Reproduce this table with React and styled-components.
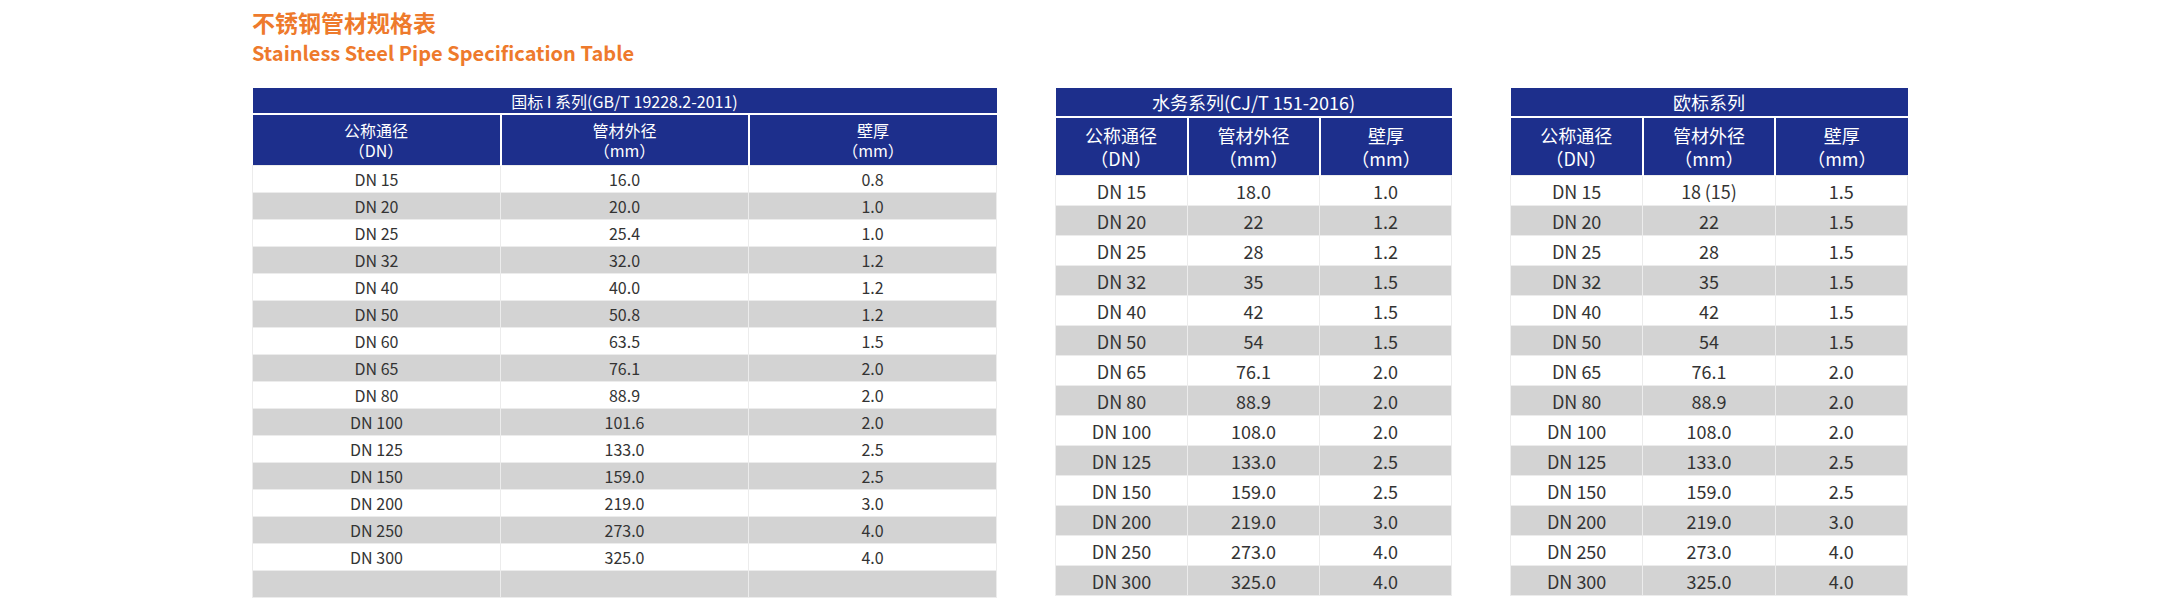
import React from "react";
import styled, { createGlobalStyle } from "styled-components";

const GlobalStyle = createGlobalStyle`
  html, body { margin: 0; padding: 0; background: #fff; }
  body { font-family: "Noto Sans CJK SC", "Noto Sans", sans-serif; color: #333; }
`;

const Page = styled.div`
  width: 2183px;
  height: 616px;
  box-sizing: border-box;
  padding: 6px 0 0 252px;
  overflow: hidden;
`;

const TitleCn = styled.h1`
  margin: 0;
  font-size: 23px;
  line-height: 32px;
  font-weight: 700;
  color: #ee7a2c;
`;

const TitleEn = styled.h2`
  margin: 0;
  font-size: 20px;
  line-height: 30px;
  font-weight: 700;
  color: #ee7a2c;
`;

const Tables = styled.div`
  display: flex;
  align-items: flex-start;
  gap: 58px;
  margin-top: 20px;
`;

const Table = styled.table`
  width: ${(p) => p.$w}px;
  border-collapse: collapse;
  table-layout: fixed;
`;

const Caption = styled.th`
  height: ${(p) => (p.$big ? 28 : 25)}px;
  padding: 0;
  background: #1d2f8c;
  color: #fff;
  font-weight: 400;
  font-size: ${(p) => (p.$big ? 18 : 16)}px;
  line-height: 1;
  text-align: center;
  border-bottom: 2px solid #fff;
`;

const HeadCell = styled.th`
  height: ${(p) => (p.$big ? 57 : 50)}px;
  padding: 0;
  background: #1d2f8c;
  color: #fff;
  font-weight: 400;
  font-size: ${(p) => (p.$big ? 18 : 16)}px;
  line-height: ${(p) => (p.$big ? 23 : 20)}px;
  text-align: center;
  border-left: 2px solid #fff;
  &:first-child { border-left: none; }
`;

const Row = styled.tr`
  background: ${(p) => (p.$alt ? "#d3d3d3" : "#fff")};
`;

const Cell = styled.td`
  height: ${(p) => (p.$big ? 29 : 26)}px;
  padding: 0;
  text-align: center;
  font-size: ${(p) => (p.$big ? 18 : 16)}px;
  line-height: 1;
  color: #333;
  border: 1px solid #ececec;
`;

const heads = [
  ["公称通径", "（DN）"],
  ["管材外径", "（mm）"],
  ["壁厚", "（mm）"],
];

const t1 = [
  ["DN 15", "16.0", "0.8"],
  ["DN 20", "20.0", "1.0"],
  ["DN 25", "25.4", "1.0"],
  ["DN 32", "32.0", "1.2"],
  ["DN 40", "40.0", "1.2"],
  ["DN 50", "50.8", "1.2"],
  ["DN 60", "63.5", "1.5"],
  ["DN 65", "76.1", "2.0"],
  ["DN 80", "88.9", "2.0"],
  ["DN 100", "101.6", "2.0"],
  ["DN 125", "133.0", "2.5"],
  ["DN 150", "159.0", "2.5"],
  ["DN 200", "219.0", "3.0"],
  ["DN 250", "273.0", "4.0"],
  ["DN 300", "325.0", "4.0"],
  ["", "", ""],
];

const tail = [
  ["DN 65", "76.1", "2.0"],
  ["DN 80", "88.9", "2.0"],
  ["DN 100", "108.0", "2.0"],
  ["DN 125", "133.0", "2.5"],
  ["DN 150", "159.0", "2.5"],
  ["DN 200", "219.0", "3.0"],
  ["DN 250", "273.0", "4.0"],
  ["DN 300", "325.0", "4.0"],
];

const t2 = [
  ["DN 15", "18.0", "1.0"],
  ["DN 20", "22", "1.2"],
  ["DN 25", "28", "1.2"],
  ["DN 32", "35", "1.5"],
  ["DN 40", "42", "1.5"],
  ["DN 50", "54", "1.5"],
  ...tail,
];

const t3 = [
  ["DN 15", "18\u2009(15)", "1.5"],
  ["DN 20", "22", "1.5"],
  ["DN 25", "28", "1.5"],
  ["DN 32", "35", "1.5"],
  ["DN 40", "42", "1.5"],
  ["DN 50", "54", "1.5"],
  ...tail,
];

function SpecTable({ title, rows, width, big }) {
  return (
    <Table $w={width}>
      <thead>
        <tr>
          <Caption colSpan={3} $big={big}>{title}</Caption>
        </tr>
        <tr>
          {heads.map(([a, b]) => (
            <HeadCell key={a} $big={big}>
              {a}
              <br />
              {b}
            </HeadCell>
          ))}
        </tr>
      </thead>
      <tbody>
        {rows.map((r, i) => (
          <Row key={i} $alt={i % 2 === 1}>
            {r.map((c, j) => (
              <Cell key={j} $big={big}>{c}</Cell>
            ))}
          </Row>
        ))}
      </tbody>
    </Table>
  );
}

export default function App() {
  return (
    <Page>
      <GlobalStyle />
      <TitleCn>不锈钢管材规格表</TitleCn>
      <TitleEn>Stainless Steel Pipe Specification Table</TitleEn>
      <Tables>
        <SpecTable title="国标 I 系列(GB/T 19228.2-2011)" rows={t1} width={745} />
        <SpecTable title="水务系列(CJ/T 151-2016)" rows={t2} width={397} big />
        <SpecTable title="欧标系列" rows={t3} width={398} big />
      </Tables>
    </Page>
  );
}
